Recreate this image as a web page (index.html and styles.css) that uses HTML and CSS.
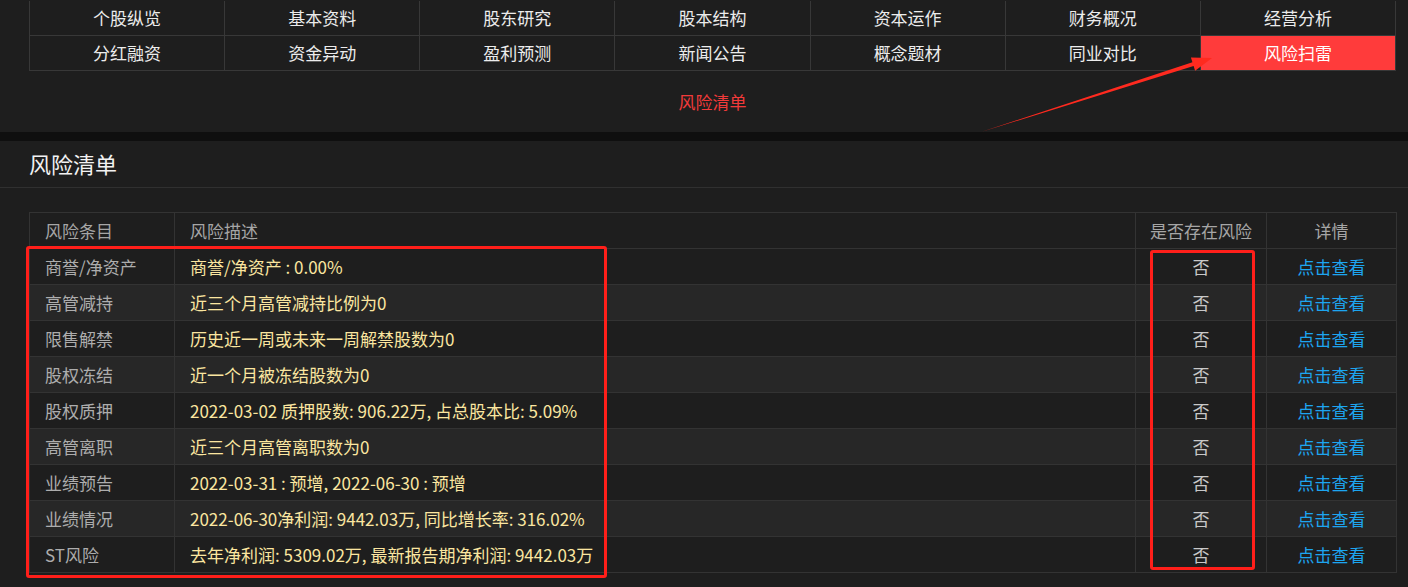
FILE: index.html
```html
<!DOCTYPE HTML>
<html>
	<head>
		<meta charset="utf-8">
		<title>风险扫雷</title>
		<link rel="stylesheet" href="styles.css">
	</head>
	<body>
		<div class="top">
			<div class="tabs">
				<a class="tab">个股纵览</a>
				<a class="tab">基本资料</a>
				<a class="tab">股东研究</a>
				<a class="tab">股本结构</a>
				<a class="tab">资本运作</a>
				<a class="tab">财务概况</a>
				<a class="tab">经营分析</a>
				<a class="tab">分红融资</a>
				<a class="tab">资金异动</a>
				<a class="tab">盈利预测</a>
				<a class="tab">新闻公告</a>
				<a class="tab">概念题材</a>
				<a class="tab">同业对比</a>
				<a class="tab active">风险扫雷</a>
			</div>
			<div class="subtab">风险清单</div>
		</div>
		<div class="sep"></div>
		<div class="panel">
			<h2 class="panel-title">风险清单</h2>
			<table class="risk">
				<colgroup>
					<col class="c-item">
					<col class="c-desc">
					<col class="c-flag">
					<col class="c-more">
				</colgroup>
				<thead>
					<tr>
						<th class="left">风险条目</th>
						<th class="left">风险描述</th>
						<th>是否存在风险</th>
						<th>详情</th>
					</tr>
				</thead>
				<tbody>
					<tr><td class="item">商誉/净资产</td><td class="desc">商誉/净资产 : 0.00%</td><td class="flag">否</td><td class="more"><a>点击查看</a></td></tr>
					<tr><td class="item">高管减持</td><td class="desc">近三个月高管减持比例为0</td><td class="flag">否</td><td class="more"><a>点击查看</a></td></tr>
					<tr><td class="item">限售解禁</td><td class="desc">历史近一周或未来一周解禁股数为0</td><td class="flag">否</td><td class="more"><a>点击查看</a></td></tr>
					<tr><td class="item">股权冻结</td><td class="desc">近一个月被冻结股数为0</td><td class="flag">否</td><td class="more"><a>点击查看</a></td></tr>
					<tr><td class="item">股权质押</td><td class="desc">2022-03-02 质押股数: 906.22万, 占总股本比: 5.09%</td><td class="flag">否</td><td class="more"><a>点击查看</a></td></tr>
					<tr><td class="item">高管离职</td><td class="desc">近三个月高管离职数为0</td><td class="flag">否</td><td class="more"><a>点击查看</a></td></tr>
					<tr><td class="item">业绩预告</td><td class="desc">2022-03-31 : 预增, 2022-06-30 : 预增</td><td class="flag">否</td><td class="more"><a>点击查看</a></td></tr>
					<tr><td class="item">业绩情况</td><td class="desc">2022-06-30净利润: 9442.03万, 同比增长率: 316.02%</td><td class="flag">否</td><td class="more"><a>点击查看</a></td></tr>
					<tr><td class="item">ST风险</td><td class="desc">去年净利润: 5309.02万, 最新报告期净利润: 9442.03万</td><td class="flag">否</td><td class="more"><a>点击查看</a></td></tr>
				</tbody>
			</table>
		</div>

		<!-- annotation marks drawn over the screenshot -->
		<div class="mark mark-left"></div>
		<div class="mark mark-right"></div>
		<svg class="arrow" width="1408" height="587" viewBox="0 0 1408 587">
			<polygon points="981,132 1193.6,66 1195.1,70.8 1212,58 1190.9,57.4 1192.4,62.2" fill="#ff2a1f"/>
		</svg>
	</body>
</html>
```

FILE: styles.css
```css
body{
	margin: 0;
	background-color: #1e1e1e;
	font-family: "Noto Sans CJK SC", "Microsoft YaHei", sans-serif;
	font-size: 17px;
	color: #e8e8e8;
	position: relative;
	height: 587px;
	overflow: hidden;
}
.top{
	height: 131px;
}
.tabs{
	display: grid;
	grid-template-columns: repeat(7, 1fr);
	gap: 1px;
	width: 1367px;
	box-sizing: border-box;
	margin-left: 29px;
	margin-top: 1px;
	padding: 0 1px 1px 1px;
	background-color: #383838;
}
.tab{
	height: 34px;
	line-height: 34px;
	text-align: center;
	background-color: #1e1e1e;
	color: #ececec;
}
.tab.active{
	background-color: #ff3b3b;
	color: #fff;
}
.subtab{
	width: 1367px;
	margin-left: 29px;
	height: 60px;
	line-height: 62px;
	text-align: center;
	color: #f23a3a;
}
.sep{
	height: 9px;
	background-color: #0f0f0f;
}
.panel-title{
	margin: 0;
	height: 46px;
	line-height: 44px;
	padding-left: 29px;
	font-size: 22px;
	font-weight: normal;
	color: #f2f2f2;
	border-bottom: 1px solid #303030;
}
.risk{
	margin: 24px 0 0 29px;
	width: 1367px;
	border-collapse: collapse;
	table-layout: fixed;
}
.c-item{ width: 145px; }
.c-desc{ width: 961px; }
.c-flag{ width: 131px; }
.c-more{ width: 130px; }
.risk th, .risk td{
	height: 35px;
	padding: 0 0 0 15px;
	border: 1px solid #333;
	font-weight: normal;
	white-space: nowrap;
}
.risk th{
	color: #a6a6a6;
	text-align: center;
	padding: 0;
}
.risk th.left{
	text-align: left;
	padding-left: 15px;
}
.risk tbody tr:nth-child(even){
	background-color: #272727;
}
.item{
	color: #adadad;
}
.desc{
	color: #fbe6a0;
}
.risk td.flag, .risk td.more{
	text-align: center;
	padding: 0;
}
.flag{
	color: #c8c8c8;
}
.more a{
	color: #1da5f0;
}
.mark{
	position: absolute;
	border: 3px solid #ff1f1a;
	border-radius: 3px;
	box-sizing: border-box;
}
.mark-left{
	left: 26px;
	top: 246px;
	width: 581px;
	height: 332px;
}
.mark-right{
	left: 1150px;
	top: 250px;
	width: 105px;
	height: 320px;
}
.arrow{
	position: absolute;
	left: 0;
	top: 0;
	pointer-events: none;
}
```
